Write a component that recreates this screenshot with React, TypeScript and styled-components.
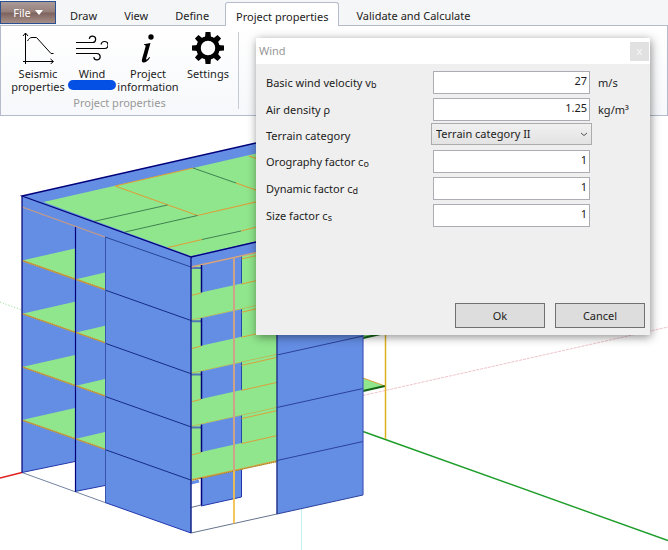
import React from "react";
import styled, { createGlobalStyle } from "styled-components";

const GlobalStyle = createGlobalStyle`
  *, *::before, *::after { box-sizing: border-box; }
  body {
    margin: 0;
    background: #fff;
    color: #1c1c1c;
    font: 11px/16px "Noto Sans", "Open Sans", sans-serif;
  }
  button, input, select { font: inherit; color: inherit; }
`;

const Window = styled.div`
  position: relative;
  display: flex;
  flex-direction: column;
  min-height: 100vh;
  overflow: hidden;
`;

const TabBar = styled.nav`
  display: flex;
  align-items: flex-end;
  height: 26px;
  padding-top: 1px;
  background: #f5f6f7;
  border-bottom: 1px solid #b4bccb;
`;

const FileButton = styled.button`
  display: flex;
  align-items: center;
  justify-content: center;
  gap: 4px;
  width: 56px;
  height: 23px;
  margin: 0 3px 1px 0;
  padding: 0;
  align-self: flex-start;
  color: #fff;
  border: 1px solid #2b5092;
  background: linear-gradient(#ab9a97, #957f7b 48%, #7d625d 52%, #a68f89);
`;

const Tab = styled.button<{ $active?: boolean }>`
  height: ${(p) => (p.$active ? 24 : 23)}px;
  margin: ${(p) => (p.$active ? "0 6px -1px 5px" : "0")};
  padding: 4px 10px 0;
  white-space: nowrap;
  border: 1px solid ${(p) => (p.$active ? "#b4bccb" : "transparent")};
  border-bottom: 0;
  border-radius: 3px 3px 0 0;
  background: ${(p) => (p.$active ? "#fff" : "transparent")};
`;

const TabGroup = styled.div`
  display: flex;
  align-items: flex-end;
  gap: 5px;
`;

const Ribbon = styled.section`
  display: flex;
  height: 90px;
  padding: 6px 8px 0;
  border: 1px solid #b4bccb;
  border-top: 0;
  background: linear-gradient(#fff, #f7f8fb);
`;

const RibbonGroup = styled.div`
  display: flex;
  flex-direction: column;
  width: 230px;
  height: 77px;
  border-right: 1px solid #c5cad5;
`;

const RibbonItems = styled.div`
  display: flex;
  height: 64px;
`;

const RibbonButton = styled.button<{ $width: number }>`
  display: flex;
  flex-direction: column;
  align-items: center;
  width: ${(p) => p.$width}px;
  padding: 0;
  border: 0;
  background: none;
  line-height: 13px;

  svg { flex: none; margin-bottom: 3px; }
  span { white-space: nowrap; }
`;

const Marker = styled.i`
  width: 48px;
  height: 10px;
  flex: none;
  border-radius: 5px;
  background: #0450e4;
`;

const GroupTitle = styled.div`
  padding: 2px 8px 0 0;
  text-align: center;
  color: #989898;
`;

const Viewport = styled.main`
  flex: 1;
  display: flex;
  min-height: 0;

  svg { flex: 1; min-width: 0; }
`;

const Dialog = styled.form`
  position: absolute;
  top: 38px;
  left: 256px;
  display: flex;
  flex-direction: column;
  width: 394px;
  height: 297px;
  background: #efefef;
  box-shadow: 1px 2px 9px rgba(0, 0, 0, 0.45);
`;

const TitleBar = styled.header`
  display: flex;
  align-items: center;
  justify-content: space-between;
  height: 26px;
  padding: 0 1px 0 3px;
  background: #fff;
  color: #989898;
`;

const CloseButton = styled.button`
  width: 19px;
  height: 19px;
  padding: 0;
  border: 0;
  color: #f8f8f8;
  background: #e1e1e1;
  line-height: 16px;
`;

const Fields = styled.div`
  display: flex;
  flex-direction: column;
  padding: 5px 5px 0 10px;
`;

const Field = styled.div<{ $short?: boolean }>`
  display: grid;
  grid-template-columns: 165px 161px 1fr;
  align-items: center;
  height: ${(p) => (p.$short ? 25 : 27)}px;
`;

const Label = styled.label`
  sub { font-size: 9px; line-height: 0; vertical-align: -1px; }
`;

const TextBox = styled.input`
  height: 23px;
  margin: 0 2px;
  padding: 0 2px 4px;
  min-width: 0;
  text-align: right;
  background: #fff;
  border: 1px solid #abadb3;
  border-radius: 0;
`;

const SelectWrap = styled.div`
  display: grid;
  align-self: start;

  select, svg { grid-area: 1 / 1; }
  svg { place-self: center end; margin-right: 4px; pointer-events: none; }
`;

const Select = styled.select`
  appearance: none;
  height: 22px;
  padding: 0 4px;
  border: 1px solid #acacac;
  border-radius: 0;
  background: linear-gradient(#f0f0f0, #e3e3e3);
`;

const Unit = styled.span`
  padding-left: 6px;
`;

const Actions = styled.footer`
  display: flex;
  justify-content: flex-end;
  gap: 10px;
  margin-top: auto;
  padding: 0 5px 7px;
`;

const ActionButton = styled.button`
  width: 90px;
  height: 25px;
  padding: 0;
  border: 1px solid #707070;
  background: #ddd;
`;

const SpectrumIcon = () => (
  <svg width="32" height="32" viewBox="0 0 32 32" fill="none" stroke="#000">
    <path d="M3.500 32V1M1 4l2.500-3L6 4M1 29.500h30M28.500 27l3 2.500-3 2.500" />
    <path d="M5.500 9C7 6.500 8 5.500 10 5.500h4.500L29 21.500h2.500" />
  </svg>
);

const WindIcon = () => (
  <svg width="32" height="32" viewBox="0 0 32 32" fill="none" stroke="#000" strokeWidth="1.200">
    <path d="M0 10.500h16.500a3.200 3.200 0 1 0-3.200-3.700" />
    <path d="M0 16.500h28.500a3.500 3.500 0 1 0-3.400-4" />
    <path d="M0 21.500h21a3.200 3.200 0 1 1-3.200 3.700" />
  </svg>
);

const InfoIcon = () => (
  <svg width="32" height="32" viewBox="0 0 32 32">
    <circle cx="19" cy="5" r="2.700" />
    <path d="M12 12.300l6.500-1.300-4.300 15.500c-.4 1.800.8 1.500 3-1.500l.9.600c-3.500 6-9.300 6.500-8.100 1.700l3.500-12.500c.4-1.500-.2-1.700-1.500-1.700z" />
  </svg>
);

const GearIcon = () => (
  <svg width="32" height="32" viewBox="0 0 32 32">
    <circle cx="16" cy="16" r="9.500" fill="none" stroke="#000" strokeWidth="4.500" />
    {[0, 45, 90, 135, 180, 225, 270, 315].map((a) => (
      <path key={a} d="M13.500 0h5l.5 6h-6z" transform={`rotate(${a} 16 16)`} />
    ))}
  </svg>
);

const BLUE = "#648ee4";
const GREEN = "#90e68c";
const NAVY = "#00007a";
const ORANGE = "#dba03c";
const STOREY = 53.2;
const levels = [0, 1, 2, 3];

const Building = () => (
  <svg viewBox="0 116 668 434" preserveAspectRatio="xMinYMin slice" fill="none" role="img" aria-label="3D building model">
    {/* axes */}
    <path d="M0 302l22 8" stroke="#8fdc8f" strokeDasharray="1 2" />
    <path d="M0 478l22-5.500" stroke="#e02020" strokeWidth="1.500" />
    <path d="M363 395.500L668 327" stroke="#eab4bc" strokeDasharray="3 1" strokeWidth=".8" />
    <path d="M363 431.500L668 540.500" stroke="#1c9c28" strokeWidth="1.400" />
    <path d="M301.500 508v42" stroke="#c4f2f2" />

    {/* balcony slabs and column */}
    <path d="M363 330l22-2v4l-22 6z" fill={GREEN} />
    <path d="M363 338l22-5" stroke="#146414" strokeWidth="2" />
    <path d="M363 378l22 8-22 5z" fill={GREEN} />
    <path d="M363 378l22 8" stroke={ORANGE} />
    <path d="M363 391l22-5" stroke="#146414" strokeWidth="2" />
    <path d="M385.500 300V439" stroke="#dfb020" strokeWidth="1.500" />

    {/* roof */}
    <path d="M22 196L256 143l107-24v120L191 257z" fill={BLUE} />
    <path d="M43.500 202L193 168l70-16v88l-72 16z" fill={GREEN} />
    <g stroke={ORANGE} strokeWidth="1.100">
      <path d="M115 186l78-18M115 186l82.500 29.500L264 200M168 247.500l34-8M241 231l20-5M236 183l28 10M249 156l12 4" />
    </g>
    <g stroke="#35764c" strokeWidth=".9">
      <path d="M93.500 221.500l74-16.500M125 232l72.500-16.500M202 239.500l39-8.500M193 168l43 15" />
    </g>

    {/* left facade */}
    <path d="M22 196l169 61v276l-86-30.500v-17l-30 6v-30l-53 11z" fill={BLUE} />
    {levels.map((i) => (
      <g key={i} transform={`translate(0 ${i * STOREY})`}>
        <path d="M22 260.500l53-12V279.500zM75 279.500l30-7v17z" fill={GREEN} />
        <path d="M22 260.500l83 29" stroke={ORANGE} strokeWidth="1.400" />
        <path d="M22 260.500l83 29" stroke="#86763c" strokeWidth=".7" strokeDasharray="1 1" />
        <path d="M105 290l86 30.500" stroke="#152b84" />
      </g>
    ))}
    <path d="M22 207l83 30" stroke="#c99b82" strokeWidth="1.300" />
    <path d="M105 237l86 30" stroke="#274596" />
    <path d="M22 472.500l83 30" stroke="#7384a2" />
    <path d="M22 472.500l53-11M75 491.500l30-6M105 502.500l86 30.500" stroke="#2237ac" />
    <path d="M105.500 237v265" stroke="#3854ac" />
    <path d="M22 196v276.500M75.500 227v264.500" stroke={NAVY} strokeWidth="1.200" />

    {/* right facade */}
    <path d="M191 533l86-19M191 507.500l12-3" stroke="#66738c" />
    <path d="M201 478l40.500-9v28l-40.500 9z" fill={BLUE} />
    <path d="M201 506l40.500-9v-28" stroke="#2237ac" />
    <path d="M191 257l86-20v11l-86 19z" fill={BLUE} />
    {levels.map((i) => (
      <g key={i} transform={`translate(0 ${i * STOREY})`}>
        <path d="M191 267l86-19v53.500l-86 19z" fill={GREEN} />
        <path d="M201 265l40.500-9v27.500l-40.500 9z" fill={BLUE} />
        <path d="M241.500 256v27.500" stroke="#2747a7" />
        <path d="M191 268h9v-1" stroke="#5376b6" strokeWidth="2" />
        <path d="M191 295.500l10-2.500M241.500 284l35.500-8M241.500 259l35.500-8" stroke={ORANGE} />
        <path d="M191 320.500l86-19" stroke={ORANGE} strokeWidth="1.600" />
        <path d="M191 321l86-19" stroke="#74742c" strokeWidth=".8" strokeDasharray="1 1" />
      </g>
    ))}
    <path d="M191 483l8-2" stroke={BLUE} strokeWidth="3" />
    <path d="M191 267l86-19" stroke="#d6a27c" strokeWidth="1.500" />
    {[0, 1, 2, 3, 4].map((i) => (
      <path key={i} d="M201.500 265v27.500" stroke={NAVY} strokeWidth="1.500" transform={`translate(0 ${i * STOREY})`} />
    ))}
    <path d="M234 257V480" stroke="#cda287" strokeWidth="2" />
    <path d="M234 471V523.500" stroke="#f2c14c" strokeWidth="1.800" />
    <path d="M277 301l86-19v213l-86 19z" fill={BLUE} />
    <path d="M277 355l86-19M277 407.500l86-19M277 460.500l86-19M277 514l86-19" stroke="#2b419c" />
    <path d="M363 300v195" stroke="#4358bc" strokeWidth="1.200" />
    <path d="M277 301v213" stroke="#26398c" strokeWidth="1.500" />

    {/* roof outline */}
    <path d="M191 257v276" stroke="#14258a" strokeWidth="1.500" />
    <path d="M256 143L22 196l169 61 65-15" stroke={NAVY} strokeWidth="1.300" />
  </svg>
);

type FieldSpec = { id: string; label: string; sub?: string; value?: string; unit?: string };

const fieldSpecs: FieldSpec[] = [
  { id: "velocity", label: "Basic wind velocity v", sub: "b", value: "27", unit: "m/s" },
  { id: "density", label: "Air density ρ", value: "1.25", unit: "kg/m³" },
  { id: "terrain", label: "Terrain category" },
  { id: "orography", label: "Orography factor c", sub: "o", value: "1" },
  { id: "dynamic", label: "Dynamic factor c", sub: "d", value: "1" },
  { id: "size", label: "Size factor c", sub: "s", value: "1" },
];

const WindDialog = () => (
  <Dialog role="dialog" aria-label="Wind" onSubmit={(e) => e.preventDefault()}>
    <TitleBar>
      Wind
      <CloseButton type="button" aria-label="Close">x</CloseButton>
    </TitleBar>
    <Fields>
      {fieldSpecs.map((f) => (
        <Field key={f.id} $short={!f.value}>
          <Label htmlFor={f.id}>
            {f.label}
            {f.sub && <sub>{f.sub}</sub>}
          </Label>
          {f.value ? (
            <TextBox id={f.id} defaultValue={f.value} />
          ) : (
            <SelectWrap>
              <Select id={f.id}>
                <option>Terrain category II</option>
              </Select>
              <svg width="8" height="5" viewBox="0 0 8 5" fill="none" stroke="#555">
                <path d="M1 1l3 2.500L7 1" />
              </svg>
            </SelectWrap>
          )}
          {f.unit && <Unit>{f.unit}</Unit>}
        </Field>
      ))}
    </Fields>
    <Actions>
      <ActionButton type="submit">Ok</ActionButton>
      <ActionButton type="button">Cancel</ActionButton>
    </Actions>
  </Dialog>
);

export default function App() {
  return (
    <Window>
      <GlobalStyle />
      <TabBar>
        <FileButton>
          File
          <svg width="8" height="5" viewBox="0 0 8 5" fill="#fff">
            <path d="M0 0h8L4 5z" />
          </svg>
        </FileButton>
        <TabGroup>
          <Tab>Draw</Tab>
          <Tab>View</Tab>
          <Tab>Define</Tab>
        </TabGroup>
        <Tab $active>Project properties</Tab>
        <Tab>Validate and Calculate</Tab>
      </TabBar>
      <Ribbon>
        <RibbonGroup>
          <RibbonItems>
            <RibbonButton $width={58}>
              <SpectrumIcon />
              <span>Seismic</span>
              <span>properties</span>
            </RibbonButton>
            <RibbonButton $width={50}>
              <WindIcon />
              <span>Wind</span>
              <Marker />
            </RibbonButton>
            <RibbonButton $width={62}>
              <InfoIcon />
              <span>Project</span>
              <span>information</span>
            </RibbonButton>
            <RibbonButton $width={58}>
              <GearIcon />
              <span>Settings</span>
            </RibbonButton>
          </RibbonItems>
          <GroupTitle>Project properties</GroupTitle>
        </RibbonGroup>
      </Ribbon>
      <Viewport>
        <Building />
      </Viewport>
      <WindDialog />
    </Window>
  );
}
